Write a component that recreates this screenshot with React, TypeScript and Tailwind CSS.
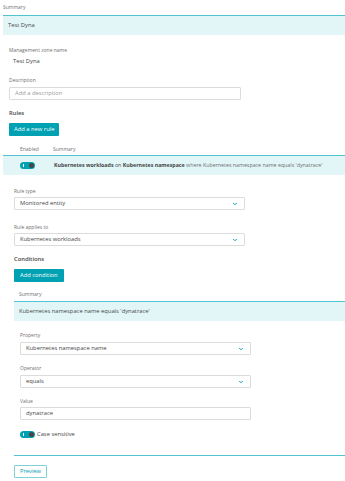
import { ChevronDown } from "lucide-react"

const teal = "bg-[#00a1b2]"

function Label({ children, className = "" }: { children: React.ReactNode; className?: string }) {
  return <div className={`h-[6px] text-[5px] leading-[6px] text-[#6f6f6f] ${className}`}>{children}</div>
}

function Select({ value, className = "" }: { value: string; className?: string }) {
  return (
    <div className={`flex h-[13px] w-[231px] items-center justify-between rounded-[1px] border border-[#dcdcdc] bg-white pl-[5px] pr-[6px] text-[5.8px] leading-[7px] text-[#454646] ${className}`}>
      <span>{value}</span>
      <ChevronDown className="h-[6px] w-[6px] text-[#00a1b2]" strokeWidth={4} />
    </div>
  )
}

function Toggle() {
  return (
    <div className={`relative flex h-[7px] w-[15px] items-center rounded-full ${teal}`}>
      <span className="ml-[3px] h-[3px] w-[1px] bg-white" />
      <span className="absolute right-[1px] h-[5px] w-[5px] rounded-full bg-[#454646]" />
    </div>
  )
}

function Panel({ children, className = "" }: { children: React.ReactNode; className?: string }) {
  return (
    <div className={`flex h-[20px] items-center whitespace-nowrap border-t-[1.5px] border-[#4fc3cf] bg-[#e2f6f8] leading-[7px] text-[#454646] ${className}`}>
      {children}
    </div>
  )
}

export default function App() {
  return (
    <div className="h-[481px] w-[345px] overflow-hidden bg-white text-[#454646]" style={{ fontFamily: "'Open Sans', sans-serif" }}>
      <div className="pl-[3px]">
        <Label className="mt-[4px]">Summary</Label>
        <Panel className="mt-[5px] pl-[5px] text-[5.8px]">Test Dyna</Panel>
      </div>

      <div className="pl-[9px]">
        <Label className="mt-[12px]">Management zone name</Label>
        <div className="mt-[5px] ml-[4px] h-[6px] text-[5.8px] leading-[6px]">Test Dyna</div>
        <Label className="mt-[13px]">Description</Label>
        <div className="mt-[4px] flex h-[13px] w-[232px] items-center rounded-[1px] border border-[#dcdcdc] pl-[5px] text-[5.8px] leading-[7px] text-[#9a9a9a]">
          Add a description
        </div>
        <div className="mt-[10px] h-[6px] text-[5.8px] font-semibold leading-[6px]">Rules</div>
        <button className={`mt-[7px] flex h-[13px] items-center rounded-[1px] px-[5px] text-[5.8px] leading-[7px] text-white ${teal}`}>
          Add a new rule
        </button>
      </div>

      <div className="pl-[3px]">
        <div className="mt-[10px] flex h-[6px] items-center text-[5px] leading-[6px] text-[#6f6f6f]">
          <span className="ml-[17px] w-[33px]">Enabled</span>
          <span>Summary</span>
        </div>
        <Panel className="mt-[3px] text-[5.3px]">
          <div className="ml-[17px] w-[34px]">
            <Toggle />
          </div>
          <span>
            <b className="font-bold">Kubernetes workloads</b> on <b className="font-bold">Kubernetes namespace</b>{" "}
            <span className="text-[#6f6f6f]">where Kubernetes namespace name equals 'dynatrace'</span>
          </span>
        </Panel>
      </div>

      <div className="pl-[14px]">
        <Label className="mt-[13px]">Rule type</Label>
        <Select className="mt-[3px]" value="Monitored entity" />
        <Label className="mt-[14px]">Rule applies to</Label>
        <Select className="mt-[3px]" value="Kubernetes workloads" />
        <div className="mt-[10px] h-[6px] text-[5.8px] font-semibold leading-[6px]">Conditions</div>
        <button className={`mt-[7px] flex h-[13px] items-center rounded-[1px] px-[6px] text-[5.8px] leading-[7px] text-white ${teal}`}>
          Add condition
        </button>
        <Label className="mt-[9px] ml-[5px]">Summary</Label>
        <Panel className="mt-[4px] pl-[5px] text-[5.8px]">Kubernetes namespace name equals 'dynatrace'</Panel>

        <div className="pl-[6px]">
          <Label className="mt-[11px]">Property</Label>
          <Select className="mt-[4px]" value="Kubernetes namespace name" />
          <Label className="mt-[10px]">Operator</Label>
          <Select className="mt-[4px]" value="equals" />
          <Label className="mt-[10px]">Value</Label>
          <div className="mt-[3px] flex h-[13px] w-[231px] items-center rounded-[1px] border border-[#dcdcdc] pl-[5px] text-[5.8px] leading-[7px]">
            dynatrace
          </div>
          <div className="mt-[11px] flex h-[7px] items-center gap-[2px] text-[5.8px] leading-[7px]">
            <Toggle />
            <span>Case sensitive</span>
          </div>
        </div>

        <div className="mt-[17px] h-[1px] bg-[#4fc3cf]" />
        <button className="mt-[9px] flex h-[13px] w-[33px] items-center justify-center rounded-[1px] border border-[#7fd0d8] text-[5.8px] leading-[7px] text-[#00a1b2]">
          Preview
        </button>
      </div>
    </div>
  )
}
